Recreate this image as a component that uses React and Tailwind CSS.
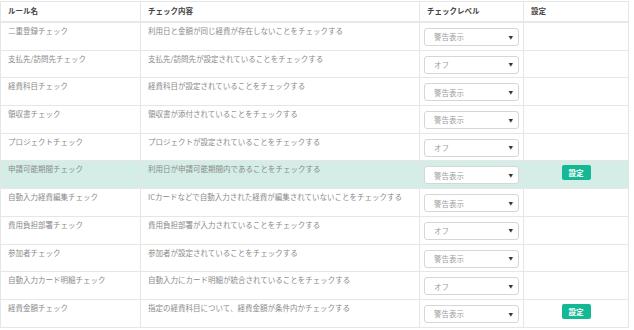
import React from 'react';

const rules = [
  { name: '二重登録チェック', desc: '利用日と金額が同じ経費が存在しないことをチェックする', level: '警告表示' },
  { name: '支払先/訪問先チェック', desc: '支払先/訪問先が設定されていることをチェックする', level: 'オフ' },
  { name: '経費科目チェック', desc: '経費科目が設定されていることをチェックする', level: '警告表示' },
  { name: '領収書チェック', desc: '領収書が添付されていることをチェックする', level: '警告表示' },
  { name: 'プロジェクトチェック', desc: 'プロジェクトが設定されていることをチェックする', level: 'オフ' },
  { name: '申請可能期間チェック', desc: '利用日が申請可能期間内であることをチェックする', level: '警告表示', setting: true, active: true },
  { name: '自動入力経費編集チェック', desc: 'ICカードなどで自動入力された経費が編集されていないことをチェックする', level: '警告表示' },
  { name: '費用負担部署チェック', desc: '費用負担部署が入力されていることをチェックする', level: 'オフ' },
  { name: '参加者チェック', desc: '参加者が設定されていることをチェックする', level: '警告表示' },
  { name: '自動入力カード明細チェック', desc: '自動入力にカード明細が統合されていることをチェックする', level: 'オフ' },
  { name: '経費金額チェック', desc: '指定の経費科目について、経費金額が条件内かチェックする', level: '警告表示', setting: true },
];

const cols = 'grid grid-cols-[140px_279px_104px_1fr]';

const LevelSelect = ({ value }) => (
  <div className="mt-[5px] ml-[4px] w-[95px] h-[18px] rounded-[3px] border border-[#d6d6d6] bg-white flex items-center justify-between pl-[9px] pr-[5px]">
    <span className="text-[7.5px] text-[#a0a0a0]">{value}</span>
    <span className="text-[4.5px] text-[#333]">▼</span>
  </div>
);

const RuleRow = ({ rule }) => (
  <div className={`${cols} h-[27.7px] border-b border-[#e6e6e6] ${rule.active ? 'bg-[#d4ede6]' : 'bg-white'}`}>
    <div className="px-[7px] pt-[2px] text-[7.5px] leading-[12px] text-[#8a8a8a] border-r border-[#e6e6e6]">{rule.name}</div>
    <div className="px-[7px] pt-[2px] text-[7.5px] leading-[12px] text-[#8a8a8a] border-r border-[#e6e6e6] whitespace-nowrap">{rule.desc}</div>
    <div className="border-r border-[#e6e6e6]">
      <LevelSelect value={rule.level} />
    </div>
    <div className="flex justify-center">
      {rule.setting && (
        <button className="mt-[4px] w-[29px] h-[15px] rounded-[2px] bg-[#15b894] text-white text-[7.5px] font-bold leading-none">
          設定
        </button>
      )}
    </div>
  </div>
);

export default function App() {
  return (
    <div className="w-[634px] h-[330px] bg-white overflow-hidden pt-px" style={{ fontFamily: '"Noto Sans CJK JP", "Noto Sans", sans-serif' }}>
      <div className="w-[629px] border-t border-l border-r border-[#e6e6e6]">
        <div className={`${cols} h-[21px] border-b-2 border-[#e8e8e8] text-[7.5px] font-bold text-[#444]`}>
          <div className="px-[7px] pt-[3px] border-r border-[#e6e6e6]">ルール名</div>
          <div className="px-[7px] pt-[3px] border-r border-[#e6e6e6]">チェック内容</div>
          <div className="px-[7px] pt-[3px] border-r border-[#e6e6e6]">チェックレベル</div>
          <div className="px-[7px] pt-[3px]">設定</div>
        </div>
        {rules.map((rule) => (
          <RuleRow key={rule.name} rule={rule} />
        ))}
      </div>
    </div>
  );
}
